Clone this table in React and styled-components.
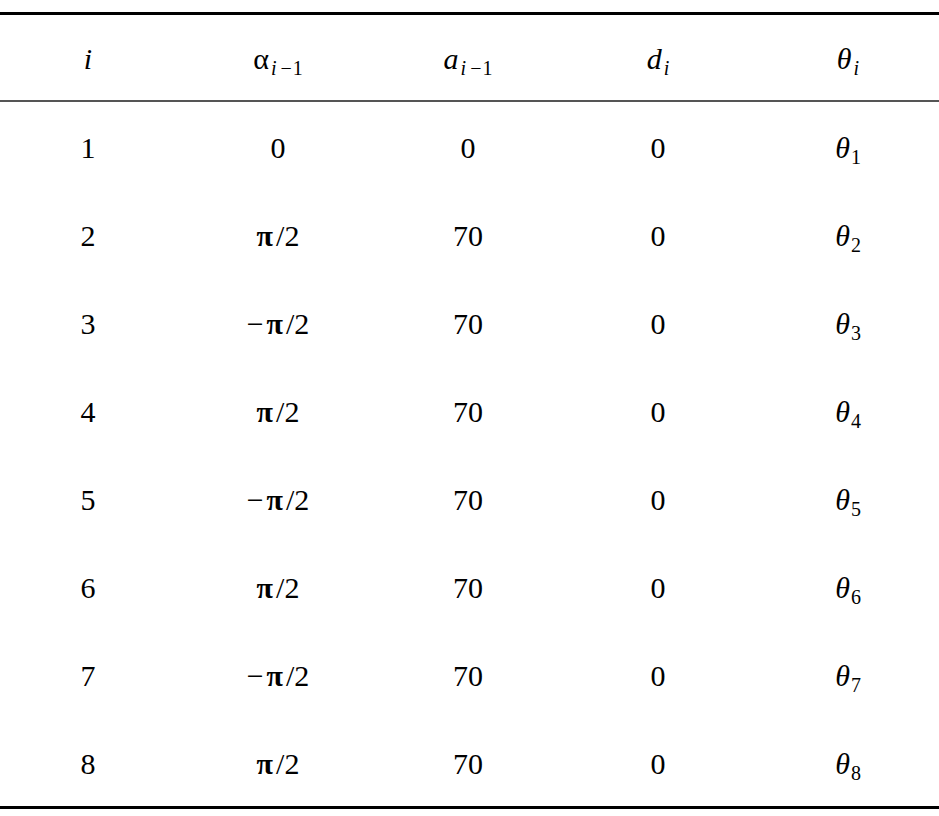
import React from "react";
import styled, { createGlobalStyle } from "styled-components";

const Global = createGlobalStyle`
  html, body { margin: 0; padding: 0; background: #fff; overflow: hidden; }
  body { font-family: "Liberation Serif", "Times New Roman", serif; color: #000; }
`;

const Page = styled.div`
  padding-top: 12px;
  width: 939px;
  overflow: hidden;
`;

const Table = styled.div`
  border-top: 3px solid #000;
  border-bottom: 3px solid #000;
`;

const Row = styled.div`
  display: grid;
  grid-template-columns: repeat(5, 190px);
  margin-left: -7px;
  width: 950px;
  height: ${(p) => (p.$head ? "85px" : "88px")};
  border-bottom: ${(p) => (p.$head ? "2px solid #555" : "none")};
  align-items: center;
`;

const Cell = styled.div`
  text-align: center;
  font-size: 30px;
  line-height: 1;
  white-space: nowrap;
  padding-top: ${(p) => (p.$head ? "2px" : "4px")};
`;

const It = styled.span`
  font-style: italic;
`;

const Sym = styled.span`
  font-family: "Liberation Serif", serif;
  font-size: ${(p) => p.$size || "30px"};
  font-weight: ${(p) => (p.$bold ? 700 : 400)};
  margin-right: ${(p) => p.$mr || "0px"};
`;

const Sub = styled.sub`
  font-size: 20px;
  vertical-align: -6px;
  line-height: 0;
  margin-left: ${(p) => p.$ml || "0px"};
`;

const Minus = styled.span`
  margin: 0 1px 0 4px;
`;

const Theta = ({ n }) => (
  <>
    <It>θ</It>
    <Sub $ml="1px">{n}</Sub>
  </>
);

const Angle = ({ v }) => {
  if (v === "0") return <>0</>;
  return (
    <>
      {v.startsWith("-") && <Sym $mr="3px">−</Sym>}
      <Sym $size="30px" $bold $mr="3px">π</Sym>
      <span>/2</span>
    </>
  );
};

const rows = [
  ["1", "0", "0"],
  ["2", "pi", "70"],
  ["3", "-pi", "70"],
  ["4", "pi", "70"],
  ["5", "-pi", "70"],
  ["6", "pi", "70"],
  ["7", "-pi", "70"],
  ["8", "pi", "70"],
];

export default function App() {
  return (
    <Page>
      <Global />
      <Table>
        <Row $head>
          <Cell $head>
            <It>i</It>
          </Cell>
          <Cell $head>
            <Sym>α</Sym>
            <Sub $ml="2px">
              <It>i</It>
              <Minus>−</Minus>1
            </Sub>
          </Cell>
          <Cell $head>
            <It>a</It>
            <Sub $ml="2px">
              <It>i</It>
              <Minus>−</Minus>1
            </Sub>
          </Cell>
          <Cell $head>
            <It>d</It>
            <Sub $ml="2px">
              <It>i</It>
            </Sub>
          </Cell>
          <Cell $head>
            <It>θ</It>
            <Sub $ml="2px">
              <It>i</It>
            </Sub>
          </Cell>
        </Row>
        {rows.map(([n, al, a]) => (
          <Row key={n}>
            <Cell>{n}</Cell>
            <Cell>
              <Angle v={al} />
            </Cell>
            <Cell>{a}</Cell>
            <Cell>0</Cell>
            <Cell>
              <Theta n={n} />
            </Cell>
          </Row>
        ))}
      </Table>
    </Page>
  );
}
